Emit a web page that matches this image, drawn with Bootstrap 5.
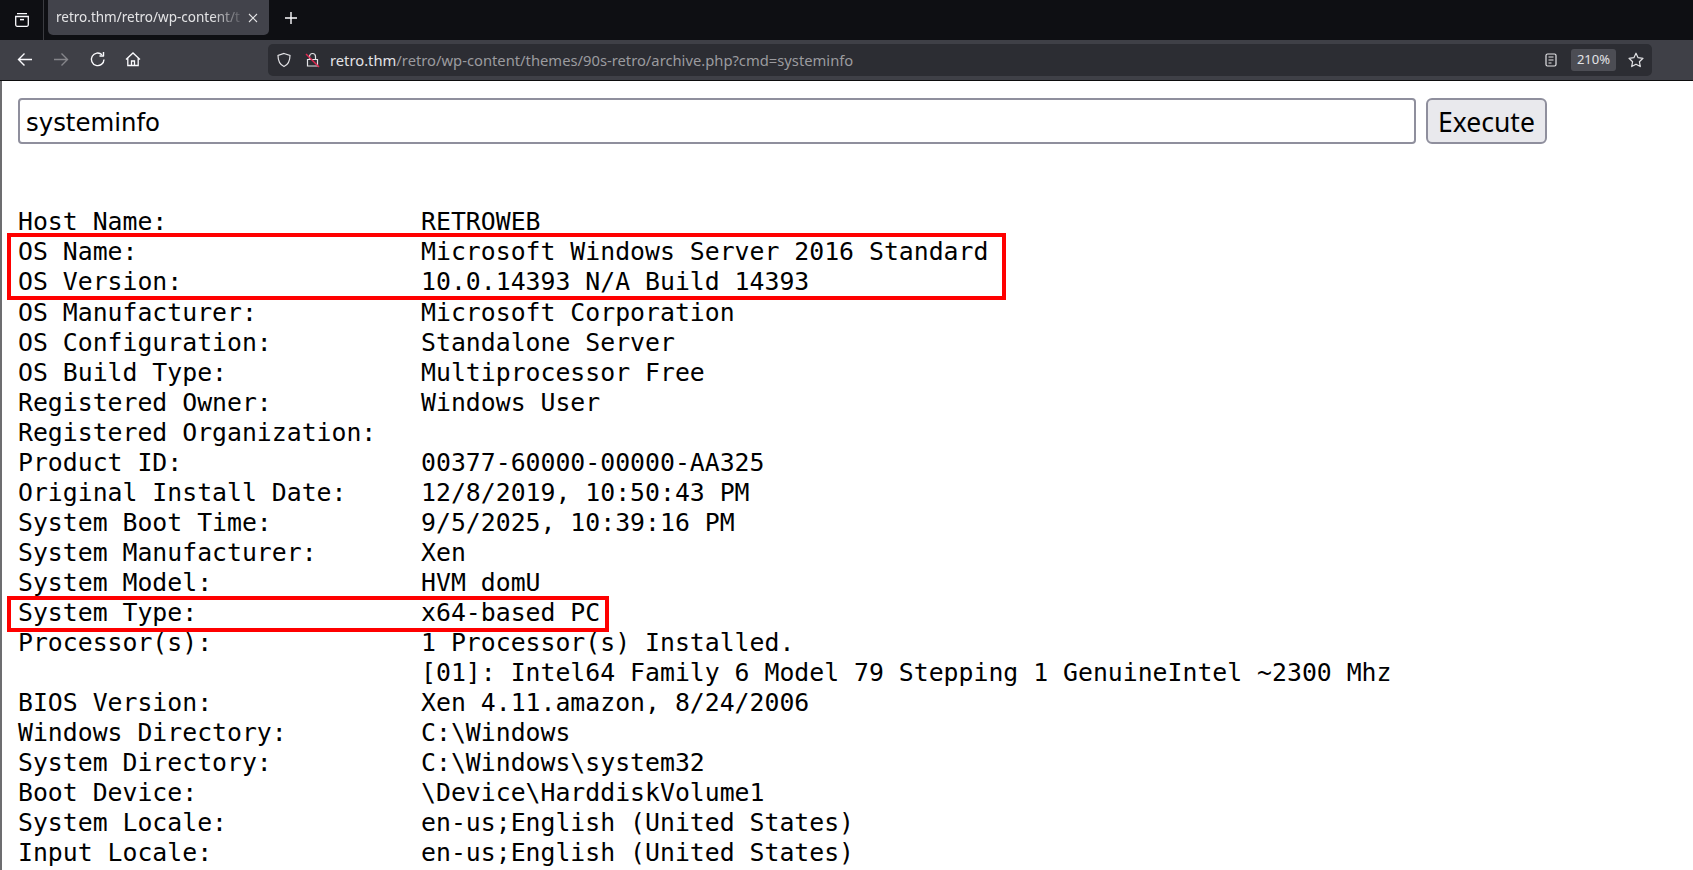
<!DOCTYPE html>
<html lang="en"><head><meta charset="utf-8"><title>retro.thm</title>
<link href="https://cdn.jsdelivr.net/npm/bootstrap@5.3.0/dist/css/bootstrap.min.css" rel="stylesheet">
<style>
html,body{height:870px;overflow:hidden;background:#fff}
body{font-family:"Noto Sans",sans-serif;position:relative}
.tabstrip{height:40px;background:#0e0f13}
.tabside{width:44px;height:40px;border-right:1px solid #3a3b40}
.tabitem{width:221px;height:35px;background:#42434b;border-radius:0 0 5px 5px;margin-left:4px;color:#e4e4e6;font-size:13.5px;padding:0 11px 0 8px;white-space:nowrap}
.tabtext{width:190px;-webkit-mask-image:linear-gradient(90deg,#000 82%,transparent 100%);mask-image:linear-gradient(90deg,#000 82%,transparent 100%)}
.newtab{width:44px;height:36px;margin-left:0}
.toolstrip{height:41px;background:#3f4047;border-bottom:1px solid #0c0c0d}
.urlfield{position:absolute;left:268px;top:44px;width:1384px;height:32px;background:#2c2d33;border-radius:5px;font-size:14.76px;color:#9b9b9f;white-space:nowrap}
.urlhost{color:#e3e3e6}
.lockicon{margin-left:13px}
.urltext{margin-left:10px}
.zoombadge{background:#4c4d54;color:#e3e3e6;font-size:13px;height:22px;width:45px;border-radius:3px;margin-left:14px;margin-right:12px}
.toolicon{position:absolute;top:50px}
.pagearea{border-left:2px solid #6d6d70;height:789px;padding:0 0 0 16px}
.cmdrow{padding-top:17px;height:69px}
.cmdfield{width:1398px;height:46px;border:2px solid #8f8f9d;border-radius:4px;font-family:"DejaVu Sans",sans-serif;font-size:24.4px;color:#000;padding:2px 6px 0;outline:0;background:#fff}
.cmdbtn{width:121px;height:46px;margin-left:10px;border:2px solid #8f8f9d;border-radius:6px;background:#e9e9ed;font-family:"Noto Sans",sans-serif;font-size:26.5px;color:#000;padding:2px 0 0;line-height:1}
.outputwrap{position:relative;padding-top:57.4px}
.outputtext{font-family:"DejaVu Sans Mono",monospace;font-size:24.81px;line-height:30.05px;color:#000;margin:0;overflow:visible;white-space:pre}
.redframe{position:absolute;border:4px solid #f00;left:-11px;pointer-events:none}
.framea{top:83px;width:999px;height:67px}
.frameb{top:446px;width:602px;height:36px}
</style></head><body>
<div class="tabstrip d-flex">
 <div class="tabside d-flex align-items-center justify-content-center">
  <svg width="16" height="16" viewBox="0 0 16 16" fill="none" stroke="#fbfbfe" stroke-width="1.3"><path d="M3 1.700h10M1.700 4.500h12.600v8.300a1.500 1.500 0 0 1-1.500 1.500H3.200a1.500 1.500 0 0 1-1.500-1.500z"/><path d="M6 7.600h4" stroke-width="1.500"/></svg>
 </div>
 <div class="tabitem d-flex align-items-center justify-content-between">
  <span class="tabtext">retro.thm/retro/wp-content/t</span>
  <svg width="10" height="10" viewBox="0 0 10 10" stroke="#e4e4e6" stroke-width="1.100"><path d="M1 1l8 8M9 1l-8 8"/></svg>
 </div>
 <div class="newtab d-flex align-items-center justify-content-center">
  <svg width="14" height="14" viewBox="0 0 14 14" stroke="#fbfbfe" stroke-width="1.400"><path d="M7 1v12M1 7h12"/></svg>
 </div>
</div>
<div class="toolstrip"></div>
<svg class="toolicon" style="left:16px" width="18" height="18" viewBox="0 0 18 18" fill="none" stroke="#fbfbfe" stroke-width="1.400"><path d="M16 9.500H2.500M8.500 3.500l-6 6 6 6"/></svg>
<svg class="toolicon" style="left:52px" width="18" height="18" viewBox="0 0 18 18" fill="none" stroke="#85858a" stroke-width="1.400"><path d="M2 9.500h13.500M9.500 3.500l6 6-6 6"/></svg>
<svg class="toolicon" style="left:89px" width="18" height="18" viewBox="0 0 18 18" fill="none" stroke="#fbfbfe" stroke-width="1.400"><path d="M15 9.500a6.300 6.300 0 1 1-2-4.800"/><path d="M14.500 2v4h-4" stroke-linejoin="round"/></svg>
<svg class="toolicon" style="left:124px" width="18" height="18" viewBox="0 0 18 18" fill="none" stroke="#fbfbfe" stroke-width="1.300"><path d="M2 9.500 9 3l7 6.500M3.800 8v7.500h10.400V8M7.500 15.500v-4.500h3v4.500"/></svg>
<div class="urlfield d-flex align-items-center">
 <svg class="ms-2" width="16" height="16" viewBox="0 0 16 16" fill="none" stroke="#e3e3e6" stroke-width="1.200"><path d="M8 1.500 14 3.500c0 5-1.500 9-6 11-4.500-2-6-6-6-11z"/></svg>
 <svg class="lockicon" width="15" height="16" viewBox="0 0 15 16" fill="none"><path d="M4.500 7V4.500a3 3 0 0 1 6 0V7M2.500 7.500h10v6.500h-10z" stroke="#e3e3e6" stroke-width="1.200"/><path d="M1 2l13 13" stroke="#e22850" stroke-width="1.400"/></svg>
 <span class="urltext"><span class="urlhost">retro.thm</span>/retro/wp-content/themes/90s-retro/archive.php?cmd=systeminfo</span>
 <span class="ms-auto d-flex align-items-center">
  <svg width="12" height="14" viewBox="0 0 12 14" fill="none" stroke="#e3e3e6" stroke-width="1.200"><rect x="1" y="1" width="10" height="12" rx="1.500"/><path d="M3.500 4h5M3.500 7h5M3.500 10h3"/></svg>
  <span class="zoombadge d-flex align-items-center justify-content-center">210%</span>
  <svg class="me-2" width="16" height="16" viewBox="0 0 16 16" fill="none" stroke="#e3e3e6" stroke-width="1.200" stroke-linejoin="round"><path d="M8 1.200l2.100 4.500 4.900.6-3.600 3.400.9 4.900L8 12.200l-4.300 2.400.9-4.900L1 6.300l4.900-.6z"/></svg>
 </span>
</div>
<main class="pagearea">
 <form class="cmdrow d-flex" onsubmit="return false">
  <input class="cmdfield" type="text" value="systeminfo" aria-label="Command">
  <button class="cmdbtn" type="button">Execute</button>
 </form>
 <div class="outputwrap">
<pre class="outputtext">Host Name:                 RETROWEB
OS Name:                   Microsoft Windows Server 2016 Standard
OS Version:                10.0.14393 N/A Build 14393
OS Manufacturer:           Microsoft Corporation
OS Configuration:          Standalone Server
OS Build Type:             Multiprocessor Free
Registered Owner:          Windows User
Registered Organization:
Product ID:                00377-60000-00000-AA325
Original Install Date:     12/8/2019, 10:50:43 PM
System Boot Time:          9/5/2025, 10:39:16 PM
System Manufacturer:       Xen
System Model:              HVM domU
System Type:               x64-based PC
Processor(s):              1 Processor(s) Installed.
                           [01]: Intel64 Family 6 Model 79 Stepping 1 GenuineIntel ~2300 Mhz
BIOS Version:              Xen 4.11.amazon, 8/24/2006
Windows Directory:         C:\Windows
System Directory:          C:\Windows\system32
Boot Device:               \Device\HarddiskVolume1
System Locale:             en-us;English (United States)
Input Locale:              en-us;English (United States)</pre>
  <div class="redframe framea"></div>
  <div class="redframe frameb"></div>
 </div>
</main>
<script src="https://cdn.jsdelivr.net/npm/bootstrap@5.3.0/dist/js/bootstrap.bundle.min.js"></script>
</body></html>
